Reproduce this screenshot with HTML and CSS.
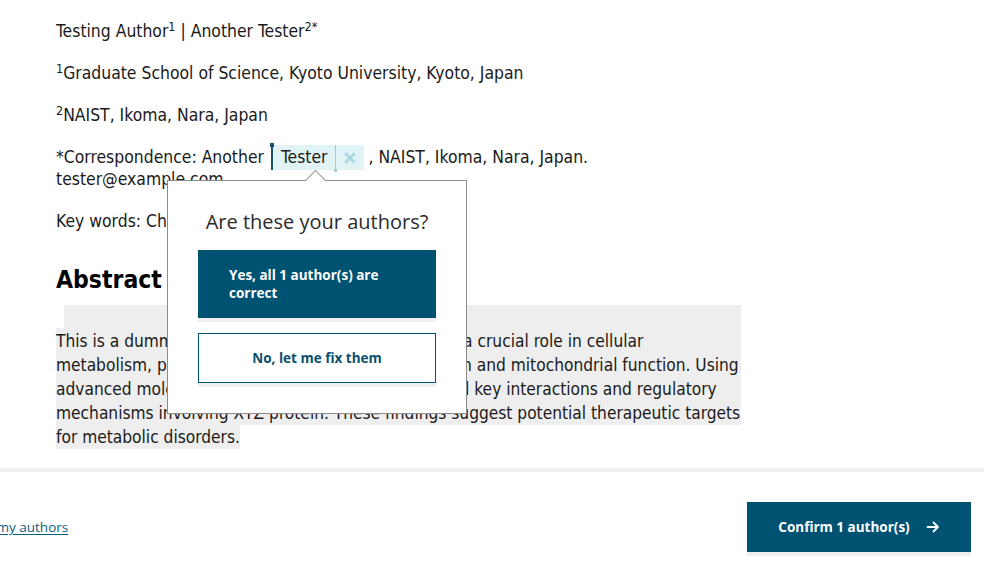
FILE: index.html
```html
<!DOCTYPE html>
<html lang="en">
<head>
<meta charset="utf-8">
<title>Author confirmation</title>
<link rel="stylesheet" href="styles.css">
</head>
<body>
<main class="doc">
  <p class="para">Testing Author<sup>1</sup> | Another Tester<sup>2*</sup></p>
  <p class="para"><sup>1</sup>Graduate School of Science, Kyoto University, Kyoto, Japan</p>
  <p class="para"><sup>2</sup>NAIST, Ikoma, Nara, Japan</p>
  <p class="para">*Correspondence: Another <span class="tag"><span class="tag-name">Tester</span><svg class="tag-x" width="12" height="12" viewBox="0 0 12 12"><path d="M2 2 L10 10 M10 2 L2 10" stroke="#a9d8df" stroke-width="2.6" stroke-linecap="round"/></svg></span> , NAIST, Ikoma, Nara, Japan.<br>tester@example.com</p>
  <p class="para">Key words: Cholesterol, XYZ protein, Metabolism</p>
  <h2 class="heading">Abstract</h2>
  <div class="hl-top"></div>
  <p class="abstract"><span class="abstract-text">This is a dummy abstract. The rat XYZ protein plays a crucial role in cellular<br>metabolism, particularly in sterol transport regulation and mitochondrial function. Using<br>advanced molecular biology techniques we identified key interactions and regulatory<br>mechanisms involving XYZ protein. These findings suggest potential therapeutic targets<br>for metabolic disorders.</span></p>
</main>

<div class="popup">
  <h3 class="popup-title">Are these your authors?</h3>
  <button class="btn btn-primary">Yes, all 1 author(s) are correct</button>
  <button class="btn btn-outline">No, let me fix them</button>
</div>

<div class="rule"></div>
<footer class="footer">
  <a class="footer-link" href="#">Edit my authors</a>
  <button class="btn btn-confirm">Confirm 1 author(s)<svg class="arrow" width="14" height="14" viewBox="0 0 14 14"><path d="M1.5 7 H12 M7.5 2.5 L12 7 L7.5 11.5" fill="none" stroke="#fff" stroke-width="1.8" stroke-linecap="round" stroke-linejoin="round"/></svg></button>
</footer>
</body>
</html>
```
FILE: styles.css
```css
* { box-sizing: border-box; }
html, body { margin: 0; padding: 0; background: #fff; }
body {
  font-family: "DejaVu Sans Condensed", "DejaVu Sans", sans-serif;
  color: #1a1a1a;
  font-size: 17.4px;
  height: 100vh;
  overflow: hidden;
  display: flex;
  flex-direction: column;
}
.doc {
  flex: 1;
  padding: 20px 0 0 56px;
  width: 741px;
}
.para {
  margin: 0 0 20px;
  line-height: 22px;
}
sup {
  font-size: 12.5px;
  line-height: 0;
  vertical-align: 6px;
}
.tag {
  position: relative;
  background: #e2f3f5;
  border-left: 2px solid #1d506a;
  padding: 2px 8px 3px 0;
  margin-left: 2px;
}
.tag::before {
  content: "";
  position: absolute;
  left: -3px;
  top: -2px;
  width: 4px;
  height: 4px;
  background: #1d506a;
}
.tag-name {
  position: relative;
  padding: 2px 7px 3px 8px;
  margin-right: 8px;
  border-right: 1px solid #a8c8d2;
}
.tag-name::after {
  content: "";
  position: absolute;
  right: -2px;
  bottom: -2px;
  width: 3px;
  height: 3px;
  background: #a8c8d2;
}
.tag-x { vertical-align: -1px; }
.heading {
  margin: 32px 0 9px;
  font-size: 24.5px;
  line-height: 32px;
  font-weight: bold;
  color: #000;
}
.hl-top {
  margin-left: 8px;
  height: 24px;
  background: #eee;
}
.abstract {
  margin: 0;
  font-size: 17.2px;
  line-height: 24px;
  white-space: nowrap;
  background: linear-gradient(#eee, #eee) no-repeat left top / 100% calc(100% - 24px);
}
.abstract-text {
  background: #eee;
  padding: 3px 0 2px;
}
.popup {
  position: absolute;
  left: 167px;
  top: 180px;
  width: 300px;
  height: 234px;
  background: #fff;
  border: 1px solid #8c8c8c;
  padding: 27px 30px 0;
  display: flex;
  flex-direction: column;
  font-family: "Open Sans", "Noto Sans", sans-serif;
}
.popup::before {
  content: "";
  position: absolute;
  left: 140px;
  top: -8px;
  width: 14px;
  height: 14px;
  background: #fff;
  border-left: 1px solid #8c8c8c;
  border-top: 1px solid #8c8c8c;
  transform: rotate(45deg);
}
.popup-title {
  margin: 0 0 14px;
  font-size: 20px;
  line-height: 28px;
  font-weight: normal;
  text-align: center;
  color: #2b2b2b;
}
.btn {
  font-family: "Open Sans", "Noto Sans", sans-serif;
  font-size: 13.5px;
  font-weight: 700;
  border: 0;
  cursor: pointer;
  box-shadow: 0 4px 0 #eef0ef;
}
.btn-primary {
  height: 68px;
  background: #005273;
  color: #fff;
  text-align: left;
  padding: 0 50px 0 31px;
  line-height: 18px;
}
.btn-outline {
  margin-top: 15px;
  height: 50px;
  background: #fff;
  color: #0b4f6e;
  border: 1px solid #005273;
  text-align: center;
}
.rule {
  height: 4px;
  background: #f1f1f1;
}
.footer {
  display: flex;
  justify-content: space-between;
  align-items: flex-start;
  padding: 30px 13px 11px 0;
  font-family: "Open Sans", "Noto Sans", sans-serif;
}
.footer-link {
  margin-left: -31px;
  margin-top: 15px;
  font-size: 13.5px;
  line-height: 20px;
  color: #0b5e84;
  text-decoration: underline;
  text-underline-offset: 2px;
}
.btn-confirm {
  width: 224px;
  height: 50px;
  background: #005273;
  color: #fff;
  display: flex;
  align-items: center;
  justify-content: center;
  gap: 16px;
}
.arrow { display: block; }
```
